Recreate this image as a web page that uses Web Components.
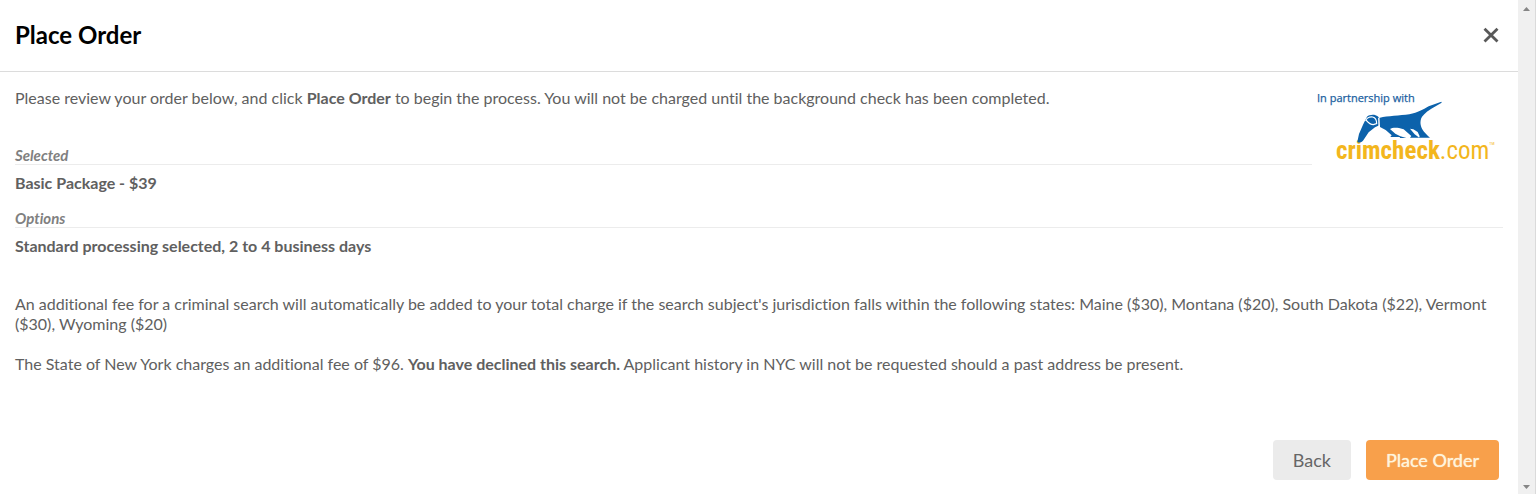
<!DOCTYPE html>
<html lang="en">
<head>
<meta charset="utf-8">
<title>Place Order</title>
<style>
  html, body { margin: 0; }
  body { background: #fff; color: #606060; font: 16px/20px Lato, "Open Sans", sans-serif; font-variant-ligatures: none; }
</style>
</head>
<body>
<order-dialog>
  <dialog-header slot="header">Place Order</dialog-header>
  <partner-logo slot="logo"></partner-logo>
  <p slot="intro">Please review your order below, and click <b>Place Order</b> to begin the process. You will not be charged until the background check has been completed.</p>
  <order-section slot="selected" label="Selected">Basic Package - $39</order-section>
  <order-section label="Options">Standard processing selected, 2 to 4 business days</order-section>
  <order-notes>
    <p>An additional fee for a criminal search will automatically be added to your total charge if the search subject's jurisdiction falls within the following states: Maine ($30), Montana ($20), South Dakota ($22), Vermont ($30), Wyoming ($20)</p>
    <p>The State of New York charges an additional fee of $96. <b>You have declined this search.</b> Applicant history in NYC will not be requested should a past address be present.</p>
  </order-notes>
  <action-button slot="actions">Back</action-button>
  <action-button slot="actions" primary>Place Order</action-button>
</order-dialog>
<script>
  const define = (name, html, setup) => {
    const template = document.createElement('template');
    template.innerHTML = html;
    customElements.define(name, class extends HTMLElement {
      connectedCallback() {
        if (this.shadowRoot) return;
        this.attachShadow({ mode: 'open' }).append(template.content.cloneNode(true));
        if (setup) setup(this);
      }
    });
  };

  define('order-dialog', `
    <style>
      :host { display: flex; min-height: 100vh; }
      main { flex: 1; min-width: 0; display: flex; flex-direction: column; }
      .body { flex: 1; padding: 16px 15px 14px; display: flex; flex-direction: column; }
      .top { display: flex; align-items: flex-start; }
      .lead { flex: 1; display: flex; flex-direction: column; gap: 38px; }
      ::slotted(p) { margin: 0; }
      footer { display: flex; justify-content: flex-end; gap: 15px; margin-top: auto; padding-right: 4px; }
    </style>
    <main>
      <slot name="header"></slot>
      <div class="body">
        <div class="top">
          <div class="lead"><slot name="intro"></slot><slot name="selected"></slot></div>
          <slot name="logo"></slot>
        </div>
        <slot></slot>
        <footer><slot name="actions"></slot></footer>
      </div>
    </main>
    <scroll-rail></scroll-rail>`);

  define('dialog-header', `
    <style>
      :host { display: flex; align-items: center; justify-content: space-between; box-sizing: border-box; height: 72px; padding: 0 19px 2px 15px; border-bottom: 1px solid #dcdcdc; }
      h1 { margin: 0; color: #000; font-size: 24px; line-height: 30px; font-weight: 700; }
      button { display: block; border: 0; padding: 0; background: none; width: 16px; height: 16px; cursor: pointer; }
      svg { display: block; }
    </style>
    <h1><slot></slot></h1>
    <button type="button" aria-label="Close"><svg width="16" height="16" viewBox="0 0 16 16"><path d="M1.5 1.7 14.5 14.5M14.5 1.7 1.5 14.5" stroke="#595959" stroke-width="2.8"/></svg></button>`);

  define('order-section', `
    <style>
      :host { display: block; }
      h2 { margin: 0; border-bottom: 1px solid #ececec; color: #808080; font-size: 15px; line-height: 18px; font-style: italic; font-weight: 700; }
      p { margin: 8px 0 16px; font-weight: 700; }
    </style>
    <h2></h2><p><slot></slot></p>`,
    el => { el.shadowRoot.querySelector('h2').textContent = el.getAttribute('label'); });

  define('order-notes', `
    <style>
      :host { display: block; margin-top: 22px; }
      ::slotted(p) { margin: 0 0 20px; }
    </style>
    <slot></slot>`);

  define('action-button', `
    <style>
      :host { display: block; }
      button { display: block; height: 40px; border: 0; border-radius: 4px; padding: 0 20px; background: #ebebeb; color: #666; font: 18px/24px Lato, "Open Sans", sans-serif; cursor: pointer; }
      :host([primary]) button { background: #f8a04b; color: #fff4dc; text-shadow: 0 0 1px #fff4dc; }
    </style>
    <button type="button"><slot></slot></button>`);

  define('partner-logo', `
    <style>
      :host { display: block; width: 191px; }
      svg { display: block; }
      .by { font: 11px "Open Sans", sans-serif; fill: #1b619f; stroke: #1b619f; stroke-width: .25; }
      .name { font: 25px "Roboto Condensed", "Liberation Sans Narrow", Roboto, sans-serif; fill: #f3b61d; }
      .strong { font-weight: 700; }
      .tm { font-size: 4px; }
    </style>
    <svg width="191" height="76" viewBox="1312 88 191 76" role="img" aria-label="In partnership with crimcheck.com">
      <text class="by" x="1317" y="102">In partnership with</text>
      <text class="name" x="1336" y="159"><tspan class="strong">crimcheck</tspan>.com<tspan class="tm" dy="-14">TM</tspan></text>
      <g transform="translate(1350 95) scale(.33333)">
        <g fill="#0c62ab">
          <path d="M90 68C112 63 150 62 178 58C205 53 218 44 236 34L274 20L275 23L244 41C225 53 217 62 213 72C209 86 213 98 222 110L234 123L240 128H207L209 124L203 111L190 103L180 101L194 118L208 128H180L184 123L161 103L147 99C134 97 125 99 120 102L136 116L151 124L169 129H150L149 126H121L125 121L107 105L90 96Z"/>
          <path d="M51 65C58 58 76 57 83 64L89 70L88 91L75 97L56 112L40 136C35 143 25 145 22 140L27 117L39 89Z"/>
        </g>
        <path d="M47 78C49 70 58 65 68 66C76 68 80 76 80 86L70 89C62 89 54 82 49 76M86 68L87 93" fill="none" stroke="#fff" stroke-width="3.5"/>
      </g>
    </svg>`);

  define('scroll-rail', `
    <style>
      :host { flex: none; display: flex; flex-direction: column; justify-content: space-between; align-items: center; box-sizing: border-box; width: 18px; padding: 7px 0 5px; background: #f0f0f0; border-right: 1px solid #dadada; }
      svg { display: block; }
    </style>
    <svg width="7" height="4" viewBox="0 0 7 4"><path d="M0 4 3.5 0 7 4Z" fill="#858585"/></svg>
    <svg width="7" height="4" viewBox="0 0 7 4"><path d="M0 0H7L3.5 4Z" fill="#858585"/></svg>`);
</script>
</body>
</html>
